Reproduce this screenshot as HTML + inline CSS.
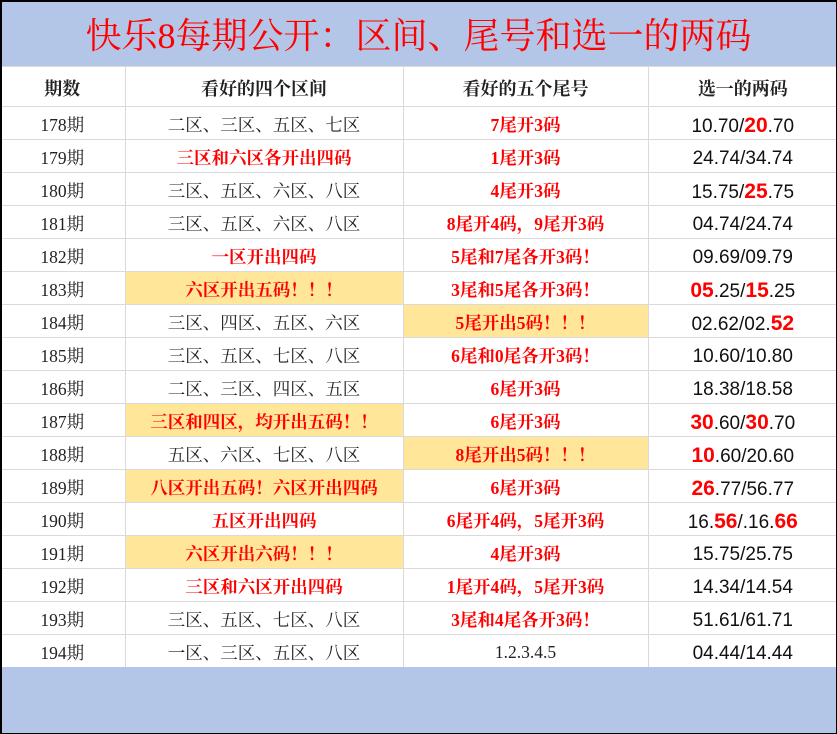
<!DOCTYPE html><html><head><meta charset="utf-8"><style>
*{margin:0;padding:0;box-sizing:border-box}
body{width:837px;height:734px;overflow:hidden;background:#fff;font-family:"Liberation Serif","Noto Serif CJK SC",serif}
#f{position:absolute;left:0;top:0;width:837px;height:734px;border:2px solid #000;border-right-width:1px;border-bottom-width:1px}
.t{position:absolute;left:0;top:0;width:837px;height:66px;background:#b4c6e7;color:#f00;font-size:36px;text-align:center;line-height:72px;font-family:"Liberation Serif","Noto Serif CJK SC",serif}
.b{position:absolute;left:0;top:667px;width:837px;height:67px;background:#b4c6e7}
table{position:absolute;left:0;top:66px;border-collapse:collapse;width:837px;table-layout:fixed}
td{border:1px solid #dadada;height:33px;text-align:center;font-size:17.5px;color:#222;padding:2px 0 0;white-space:nowrap}
tr.h td{height:40px;font-weight:bold;font-size:18px}
.r{color:#f00;font-weight:bold}
.y{background:#ffe699}
.n{font-family:"Liberation Sans",Arial,sans-serif;font-size:19px;color:#111;padding-top:5px}
.n b{color:#f00;font-size:21px}
td:first-child{border-left:none}td:last-child{border-right:none}
</style></head><body>
<div class="t">快乐8每期公开：区间、尾号和选一的两码</div>
<table>
<colgroup><col style="width:125px"><col style="width:278px"><col style="width:245px"><col style="width:189px"></colgroup>
<tr class="h"><td>期数</td><td>看好的四个区间</td><td>看好的五个尾号</td><td>选一的两码</td></tr>
<tr><td>178期</td><td>二区、三区、五区、七区</td><td class="r">7尾开3码</td><td class="n">10.70/<b>20</b>.70</td></tr>
<tr><td>179期</td><td class="r">三区和六区各开出四码</td><td class="r">1尾开3码</td><td class="n">24.74/34.74</td></tr>
<tr><td>180期</td><td>三区、五区、六区、八区</td><td class="r">4尾开3码</td><td class="n">15.75/<b>25</b>.75</td></tr>
<tr><td>181期</td><td>三区、五区、六区、八区</td><td class="r">8尾开4码，9尾开3码</td><td class="n">04.74/24.74</td></tr>
<tr><td>182期</td><td class="r">一区开出四码</td><td class="r">5尾和7尾各开3码！</td><td class="n">09.69/09.79</td></tr>
<tr><td>183期</td><td class="r y">六区开出五码！！！</td><td class="r">3尾和5尾各开3码！</td><td class="n"><b>05</b>.25/<b>15</b>.25</td></tr>
<tr><td>184期</td><td>三区、四区、五区、六区</td><td class="r y">5尾开出5码！！！</td><td class="n">02.62/02.<b>52</b></td></tr>
<tr><td>185期</td><td>三区、五区、七区、八区</td><td class="r">6尾和0尾各开3码！</td><td class="n">10.60/10.80</td></tr>
<tr><td>186期</td><td>二区、三区、四区、五区</td><td class="r">6尾开3码</td><td class="n">18.38/18.58</td></tr>
<tr><td>187期</td><td class="r y">三区和四区，均开出五码！！</td><td class="r">6尾开3码</td><td class="n"><b>30</b>.60/<b>30</b>.70</td></tr>
<tr><td>188期</td><td>五区、六区、七区、八区</td><td class="r y">8尾开出5码！！！</td><td class="n"><b>10</b>.60/20.60</td></tr>
<tr><td>189期</td><td class="r y">八区开出五码！六区开出四码</td><td class="r">6尾开3码</td><td class="n"><b>26</b>.77/56.77</td></tr>
<tr><td>190期</td><td class="r">五区开出四码</td><td class="r">6尾开4码，5尾开3码</td><td class="n">16.<b>56</b>/.16.<b>66</b></td></tr>
<tr><td>191期</td><td class="r y">六区开出六码！！！</td><td class="r">4尾开3码</td><td class="n">15.75/25.75</td></tr>
<tr><td>192期</td><td class="r">三区和六区开出四码</td><td class="r">1尾开4码，5尾开3码</td><td class="n">14.34/14.54</td></tr>
<tr><td>193期</td><td>三区、五区、七区、八区</td><td class="r">3尾和4尾各开3码！</td><td class="n">51.61/61.71</td></tr>
<tr><td>194期</td><td>一区、三区、五区、八区</td><td>1.2.3.4.5</td><td class="n">04.44/14.44</td></tr>
</table>
<div class="b"></div>
<div id="f"></div>
</body></html>
